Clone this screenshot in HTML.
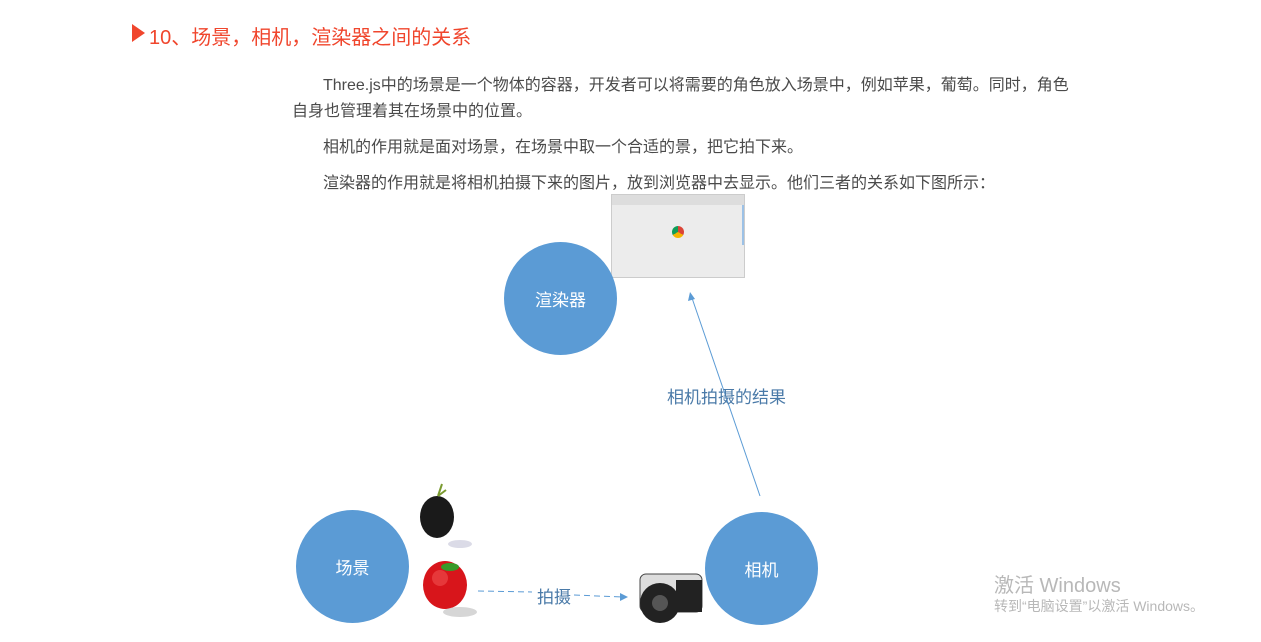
<!DOCTYPE html>
<html><head><meta charset="utf-8"><style>
body{margin:0;width:1261px;height:642px;background:#fff;position:relative;overflow:hidden;font-family:"Liberation Sans","Microsoft YaHei","Noto Sans CJK SC",sans-serif}
.a{position:absolute;white-space:nowrap}
.p{color:#4a4a4a;font-size:16px}
.c{position:absolute;border-radius:50%;background:#5b9bd5;color:#fff;font-size:17px;display:flex;align-items:center;justify-content:center}
</style></head><body>
<div class="a" style="left:132px;top:24px;width:0;height:0;border-left:13px solid #f0462d;border-top:9px solid transparent;border-bottom:9px solid transparent"></div>
<div class="a" style="left:149px;top:21px;font-size:20px;color:#f0462d">10、场景，相机，渲染器之间的关系</div>
<div class="a p" style="left:323px;top:71px">Three.js中的场景是一个物体的容器，开发者可以将需要的角色放入场景中，例如苹果，葡萄。同时，角色</div>
<div class="a p" style="left:292px;top:97px">自身也管理着其在场景中的位置。</div>
<div class="a p" style="left:323px;top:133px">相机的作用就是面对场景，在场景中取一个合适的景，把它拍下来。</div>
<div class="a p" style="left:323px;top:169px">渲染器的作用就是将相机拍摄下来的图片，放到浏览器中去显示。他们三者的关系如下图所示：</div>
<div class="a" style="left:611px;top:194px;width:134px;height:84px;background:#ececec;border:1px solid #ccc;box-sizing:border-box">
<div style="height:10px;background:#ddd"></div>
<div style="position:absolute;left:60px;top:31px;width:12px;height:12px;border-radius:50%;background:conic-gradient(#db4437 0 120deg,#f4b400 0 240deg,#0f9d58 0);"></div>
<div style="position:absolute;right:0;top:10px;width:2px;height:40px;background:#9cc1e6"></div>
</div>
<div class="c" style="left:504px;top:242px;width:113px;height:113px">渲染器</div>
<div class="c" style="left:296px;top:510px;width:113px;height:113px">场景</div>
<div class="c" style="left:705px;top:512px;width:113px;height:113px">相机</div>
<svg class="a" style="left:0;top:0" width="1261" height="642">
<line x1="760" y1="496" x2="692" y2="298" stroke="#5b9bd5" stroke-width="1"/>
<polygon points="690,292 688,301 695,299" fill="#5b9bd5"/>
<line x1="478" y1="591" x2="532" y2="592" stroke="#5b9bd5" stroke-dasharray="6,4"/>
<line x1="574" y1="595" x2="622" y2="597" stroke="#5b9bd5" stroke-dasharray="6,4"/>
<polygon points="628,597 620,593 620,601" fill="#5b9bd5"/>
<ellipse cx="445" cy="585" rx="22" ry="24" fill="#d8151b"/>
<ellipse cx="440" cy="578" rx="8" ry="8" fill="#f05050" opacity=".6"/>
<ellipse cx="450" cy="567" rx="9" ry="4" fill="#3a9a2a"/>
<ellipse cx="460" cy="612" rx="17" ry="5" fill="#bbb" opacity=".6"/>
<ellipse cx="460" cy="544" rx="12" ry="4" fill="#ccd" opacity=".7"/>
<ellipse cx="437" cy="517" rx="17" ry="21" fill="#1a1a1a"/>
<path d="M438 496 L442 484 M438 496 L446 490" stroke="#7a9a30" stroke-width="2"/>
<rect x="640" y="574" width="62" height="38" rx="6" fill="#ddd" stroke="#444"/>
<rect x="676" y="580" width="26" height="32" fill="#222"/>
<circle cx="660" cy="603" r="20" fill="#222"/>
<circle cx="660" cy="603" r="8" fill="#555"/>
</svg>
<div class="a" style="left:667px;top:383px;font-size:17px;color:#4a7aa8">相机拍摄的结果</div>
<div class="a" style="left:537px;top:583px;font-size:17px;color:#4a7aa8">拍摄</div>
<div class="a" style="left:994px;top:569px;font-size:20px;color:#b8b8b8">激活 Windows</div>
<div class="a" style="left:994px;top:596px;font-size:14px;color:#b8b8b8">转到“电脑设置”以激活 Windows。</div>
</body></html>
